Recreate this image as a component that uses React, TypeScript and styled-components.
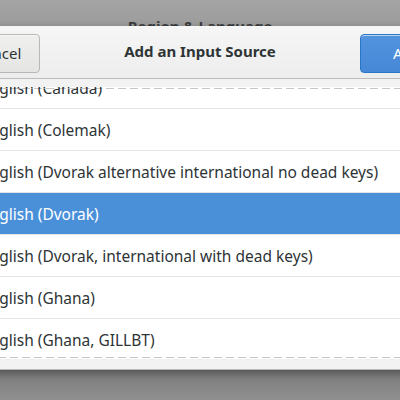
import React from 'react'
import styled, { createGlobalStyle } from 'styled-components'

const GlobalStyle = createGlobalStyle`
  html, body {
    margin: 0;
    padding: 0;
    background: #8a8a8a;
    overflow: hidden;
  }
  * {
    box-sizing: border-box;
  }
`

const Screen = styled.div`
  width: 400px;
  height: 400px;
  overflow: hidden;
  display: flex;
  flex-direction: column;
  background: linear-gradient(to bottom, #a4a4a4 0px, #9c9c9c 26px, #7a7a7a 370px, #909090 400px);
  font-family: 'Noto Sans', 'Open Sans', sans-serif;
  color: #2e3436;
`

const ParentTitleBar = styled.div`
  height: 26px;
  flex: none;
  overflow: hidden;
  padding-top: 16px;
  text-align: center;
  font-size: 15px;
  line-height: 20px;
  font-weight: 700;
  color: #3b3e40;
`

const Dialog = styled.div`
  width: 500px;
  margin-left: -50px;
  flex: none;
  display: flex;
  flex-direction: column;
  background: #f2f2f2;
  border-bottom: 1px solid #b8b8b8;
  box-shadow: 0 3px 8px rgba(0, 0, 0, 0.35);
`

const HeaderBar = styled.div`
  height: 53px;
  padding: 2px 6px 0;
  display: flex;
  align-items: center;
  justify-content: space-between;
  background: linear-gradient(to bottom, #f6f6f6, #ededed);
  border-bottom: 1px solid #bdbdbd;
`

const Title = styled.div`
  margin-bottom: 4px;
  font-size: 15px;
  font-weight: 700;
  color: #2e3436;
`

const Button = styled.button<{ $suggested?: boolean }>`
  height: 39px;
  width: 84px;
  padding: ${p => (p.$suggested ? '0 0 0 32px' : '0')};
  text-align: ${p => (p.$suggested ? 'left' : 'center')};
  border-radius: 4px;
  font-family: inherit;
  font-size: 15px;
  border: 1px solid ${p => (p.$suggested ? '#2a76c6' : '#b8b8b5')};
  color: ${p => (p.$suggested ? '#ffffff' : '#2e3436')};
  background: ${p =>
    p.$suggested
      ? 'linear-gradient(to bottom, #5294de, #4688d6)'
      : 'linear-gradient(to bottom, #efefee, #e5e5e3)'};
  box-shadow: inset 0 1px rgba(255, 255, 255, 0.6);
`

const Content = styled.div`
  padding: 8px 0 10px;
  background: #f2f2f2;
`

const List = styled.div`
  position: relative;
  height: 272px;
  overflow: hidden;
  background: #ffffff;
`

const Row = styled.div<{ $selected?: boolean; $first?: boolean }>`
  height: 42px;
  flex: none;
  margin-top: ${p => (p.$first ? '-20px' : '0')};
  padding-left: 31px;
  display: flex;
  align-items: center;
  font-size: 15.5px;
  border-bottom: 1px solid #e4e4e4;
  background: ${p => (p.$selected ? '#4a90d9' : '#ffffff')};
  color: ${p => (p.$selected ? '#ffffff' : '#2e3436')};
`

const Undershoot = styled.div<{ $edge: 'top' | 'bottom' }>`
  position: absolute;
  left: 0;
  right: 0;
  height: 1px;
  ${p => (p.$edge === 'top' ? 'top: 1px;' : 'bottom: 1px;')}
  background-image: repeating-linear-gradient(
    to right,
    rgba(0, 0, 0, 0.22) 0px,
    rgba(0, 0, 0, 0.22) 8px,
    rgba(255, 255, 255, 0.4) 8px,
    rgba(255, 255, 255, 0.4) 12px
  );
`

const sources = [
  'English (Canada)',
  'English (Colemak)',
  'English (Dvorak alternative international no dead keys)',
  'English (Dvorak)',
  'English (Dvorak, international with dead keys)',
  'English (Ghana)',
  'English (Ghana, GILLBT)',
  'English (Ghana, multilingual)',
]

export default function App() {
  return (
    <>
      <GlobalStyle />
      <Screen>
        <ParentTitleBar>Region &amp; Language</ParentTitleBar>
        <Dialog>
          <HeaderBar>
            <Button>Cancel</Button>
            <Title>Add an Input Source</Title>
            <Button $suggested>Add</Button>
          </HeaderBar>
          <Content>
            <List>
              {sources.map((name, i) => (
                <Row key={name} $first={i === 0} $selected={name === 'English (Dvorak)'}>
                  {name}
                </Row>
              ))}
              <Undershoot $edge="top" />
              <Undershoot $edge="bottom" />
            </List>
          </Content>
        </Dialog>
      </Screen>
    </>
  )
}
